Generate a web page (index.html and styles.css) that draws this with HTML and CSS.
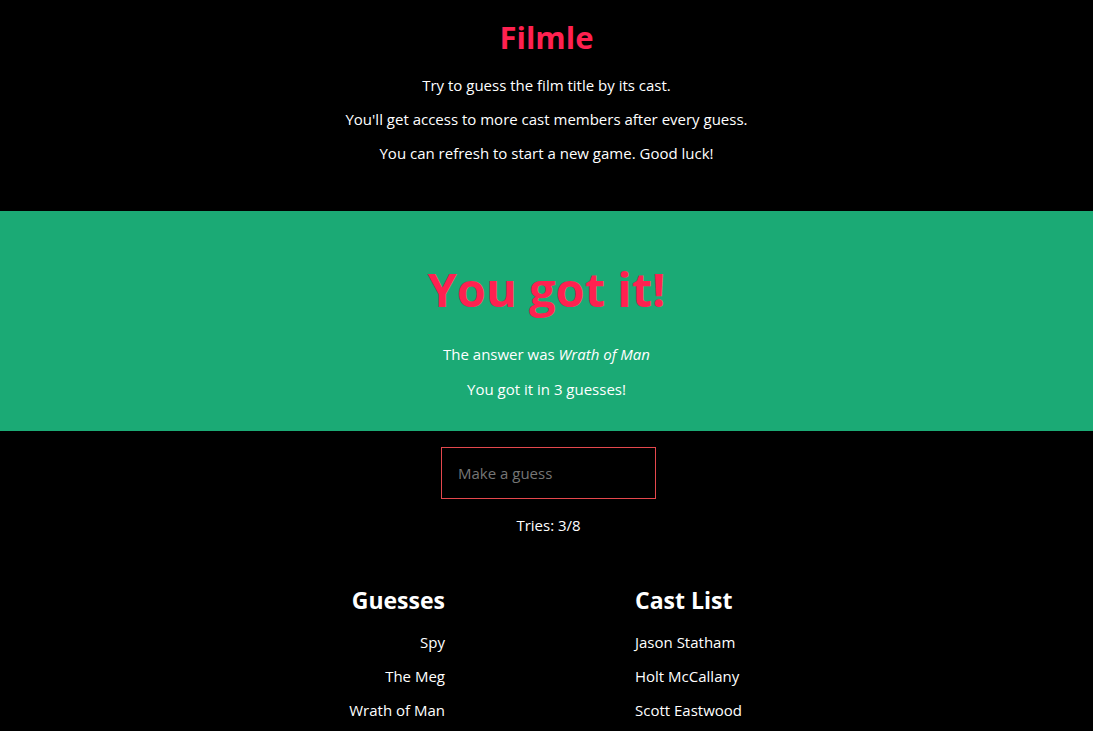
FILE: index.html
```html
<!DOCTYPE html>
<html lang="en">
<head>
<meta charset="utf-8">
<title>Filmle</title>
<link rel="stylesheet" href="styles.css">
</head>
<body>
<header class="intro">
  <h1 class="logo">Filmle</h1>
  <p>Try to guess the film title by its cast.</p>
  <p>You'll get access to more cast members after every guess.</p>
  <p>You can refresh to start a new game. Good luck!</p>
</header>
<section class="win">
  <h2 class="win-title">You got it!</h2>
  <p>The answer was <em>Wrath of Man</em></p>
  <p>You got it in 3 guesses!</p>
</section>
<main class="game">
  <input class="guess-input" type="text" placeholder="Make a guess">
  <p class="tries">Tries: 3/8</p>
  <div class="columns">
    <div class="col col-guesses">
      <h3>Guesses</h3>
      <ul>
        <li>Spy</li>
        <li>The Meg</li>
        <li>Wrath of Man</li>
      </ul>
    </div>
    <div class="col col-cast">
      <h3>Cast List</h3>
      <ul>
        <li>Jason Statham</li>
        <li>Holt McCallany</li>
        <li>Scott Eastwood</li>
      </ul>
    </div>
  </div>
</main>
</body>
</html>
```
FILE: styles.css
```css
html, body {
  margin: 0;
  padding: 0;
  background: #000;
  color: #fff;
  font-family: "Open Sans", "Noto Sans", sans-serif;
  font-size: 15px;
}

p {
  margin: 14px 0;
  line-height: 20px;
}

.intro {
  text-align: center;
  padding: 17px 0 34px;
}

.logo {
  margin: 0 0 18px;
  font-size: 31px;
  line-height: 40px;
  font-weight: 700;
  color: #ff2150;
}

.win {
  background: #1baa75;
  text-align: center;
  padding: 48px 0 17px;
}

.win p {
  margin: 15px 0;
}

.win-title {
  margin: 0 0 25px;
  font-size: 47px;
  line-height: 60px;
  font-weight: 700;
  color: #ff2150;
}

.game {
  display: flex;
  flex-direction: column;
  align-items: center;
  padding-top: 16px;
  padding-left: 4px;
}

.guess-input {
  box-sizing: border-box;
  width: 215px;
  height: 52px;
  margin: 0;
  padding: 0 16px;
  background: #000;
  border: 1px solid #e5484d;
  color: #fff;
  font-family: inherit;
  font-size: 15px;
  outline: none;
}

.guess-input::placeholder {
  color: #757575;
}

.tries {
  margin: 16px 0 0;
}

.columns {
  display: flex;
  justify-content: center;
  gap: 190px;
  padding-right: 17px;
  align-self: stretch;
  margin-top: 50px;
}

.col {
  width: 200px;
}

.col-guesses {
  text-align: right;
}

.col-cast {
  text-align: left;
}

.col h3 {
  margin: 0;
  font-size: 23px;
  line-height: 30px;
  font-weight: 700;
}

.col ul {
  list-style: none;
  margin: 17px 0 0;
  padding: 0;
  display: flex;
  flex-direction: column;
  gap: 14px;
}

.col li {
  line-height: 20px;
}
```
